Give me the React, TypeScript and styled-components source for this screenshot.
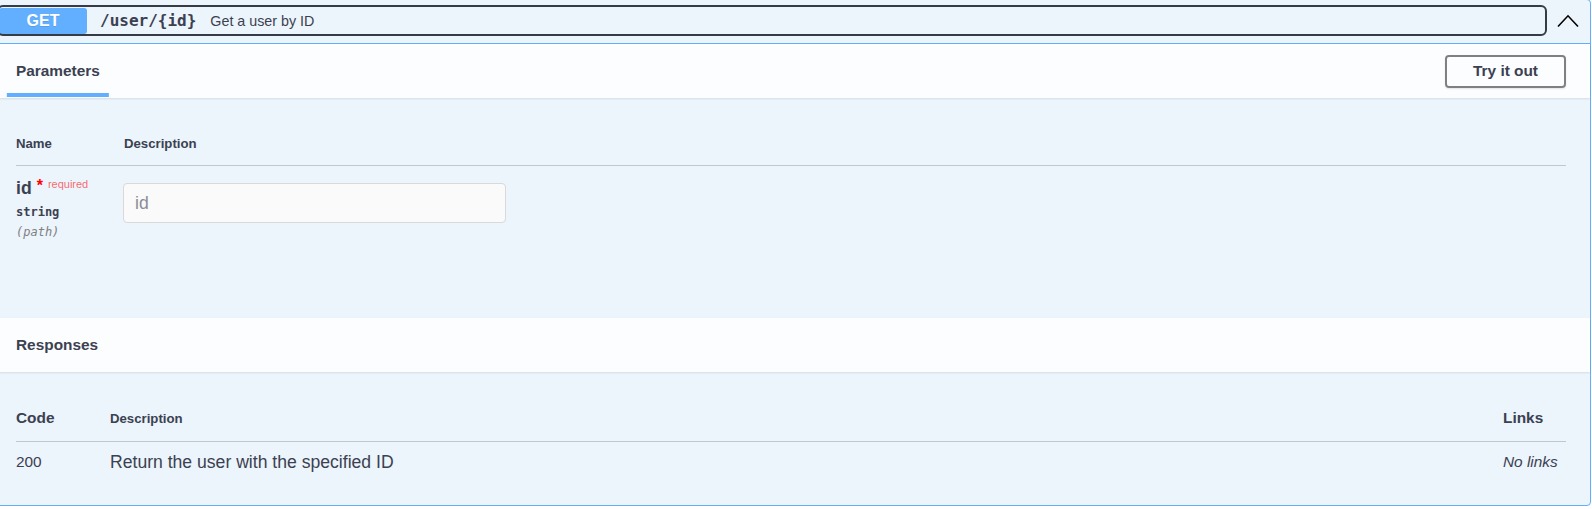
import React from 'react';
import styled, { createGlobalStyle } from 'styled-components';

const GlobalStyle = createGlobalStyle`
  html, body {
    margin: 0;
    padding: 0;
    background: #fff;
    overflow: hidden;
  }
  body {
    font-family: "Liberation Sans", Arial, sans-serif;
    color: #3b4151;
  }
`;

const Opblock = styled.div`
  box-sizing: border-box;
  width: calc(100% + 6px);
  margin: -1px 0 0 -7px;
  border: 1px solid #61affe;
  border-radius: 4px;
  background: #ecf4fc;
`;

const Summary = styled.div`
  display: flex;
  align-items: flex-start;
  height: 44px;
  box-sizing: border-box;
  padding: 7px 0 0 5px;
  border-bottom: 1px solid #61affe;
`;

const SummaryControl = styled.button`
  flex: 1;
  display: flex;
  align-items: center;
  height: 27px;
  padding: 0;
  margin: 0;
  border: none;
  background: transparent;
  outline: 2px solid #363b48;
  border-radius: 4px;
  cursor: pointer;
  text-align: left;
`;

const MethodBadge = styled.span`
  box-sizing: border-box;
  width: 88px;
  height: 26px;
  display: flex;
  align-items: center;
  justify-content: center;
  background: #61affe;
  border-radius: 3px;
  color: #fff;
  font-weight: 700;
  font-size: 16px;
  text-shadow: 0 1px 0 rgba(0, 0, 0, 0.1);
`;

const PathText = styled.span`
  font-family: "DejaVu Sans Mono", "Liberation Mono", monospace;
  font-weight: 700;
  font-size: 16px;
  color: #3b4151;
  padding-left: 13px;
`;

const SummaryDescription = styled.span`
  font-size: 14.3px;
  color: #3b4151;
  padding-left: 14px;
`;

const ArrowButton = styled.button`
  width: 44px;
  height: 27px;
  padding: 0;
  margin: 0 0 0 1px;
  border: none;
  background: transparent;
  display: flex;
  align-items: center;
  justify-content: center;
  cursor: pointer;
`;

const SectionHeader = styled.div`
  display: flex;
  align-items: center;
  justify-content: space-between;
  height: 54px;
  padding: 0 24px 0 22px;
  background: rgba(255, 255, 255, 0.8);
  box-shadow: 0 1px 2px rgba(0, 0, 0, 0.1);
  position: relative;
`;

const SectionTitle = styled.h4`
  margin: 0;
  font-size: 15.4px;
  font-weight: 700;
  color: #3b4151;
`;

const TabTitle = styled.span`
  position: relative;
  display: inline-block;
  &::after {
    content: '';
    position: absolute;
    left: 50%;
    bottom: -17px;
    width: 122%;
    height: 4px;
    transform: translateX(-50%);
    background: #61affe;
  }
`;

const TryButton = styled.button`
  box-sizing: border-box;
  width: 121px;
  height: 33px;
  border: 2px solid #808080;
  border-radius: 4px;
  background: transparent;
  font-family: "Liberation Sans", Arial, sans-serif;
  font-size: 15.4px;
  font-weight: 700;
  color: #3b4151;
  cursor: pointer;
  box-shadow: 0 1px 2px rgba(0, 0, 0, 0.1);
`;

const SectionBody = styled.div<{ $height?: number }>`
  box-sizing: border-box;
  padding: 22px 24px 22px 22px;
  height: ${({ $height }) => ($height ? `${$height}px` : 'auto')};
`;

const HeadRow = styled.div<{ $height: number }>`
  display: flex;
  align-items: center;
  height: ${({ $height }) => $height}px;
  border-bottom: 1px solid rgba(59, 65, 81, 0.25);
`;

const BodyRow = styled.div<{ $pad: string }>`
  display: flex;
  align-items: flex-start;
  padding: ${({ $pad }) => $pad};
`;

const Cell = styled.div<{ $width?: number; $grow?: boolean }>`
  width: ${({ $width }) => ($width ? `${$width}px` : 'auto')};
  flex: ${({ $grow }) => ($grow ? 1 : 'none')};
`;

const ColHeader = styled.span<{ $size: number }>`
  font-size: ${({ $size }) => $size}px;
  font-weight: 700;
  color: #3b4151;
`;

const ParamName = styled.div`
  display: flex;
  align-items: flex-start;
  font-size: 17.6px;
  font-weight: 700;
  color: #3b4151;
  line-height: 20px;
  margin-top: -5px;
`;

const Asterisk = styled.span`
  color: red;
  font-size: 16px;
  font-weight: 700;
  margin-left: 5px;
  line-height: 16px;
`;

const RequiredLabel = styled.span`
  color: rgba(255, 0, 0, 0.6);
  font-size: 11px;
  font-weight: 400;
  margin-left: 5px;
  line-height: 14px;
  margin-top: -1px;
`;

const ParamType = styled.div`
  font-family: "DejaVu Sans Mono", "Liberation Mono", monospace;
  font-size: 12px;
  font-weight: 700;
  color: #3b4151;
  padding-top: 7px;
  line-height: 15px;
`;

const ParamIn = styled.div`
  font-family: "DejaVu Sans Mono", "Liberation Mono", monospace;
  font-size: 12px;
  font-style: italic;
  color: #808080;
  padding-top: 5px;
  line-height: 15px;
`;

const TextInput = styled.input`
  box-sizing: border-box;
  width: 383px;
  height: 40px;
  padding: 0 11px;
  margin: 0;
  border: 1px solid #d9d9d9;
  border-radius: 4px;
  background: #fafafa;
  font-family: "Liberation Sans", Arial, sans-serif;
  font-size: 17.6px;
  color: #3b4151;
  outline: none;
  &::placeholder {
    color: #8a8d94;
  }
`;

const CodeText = styled.span`
  font-size: 15.4px;
  color: #3b4151;
  line-height: 20px;
`;

const ResponseDescription = styled.span`
  font-size: 17.6px;
  color: #3b4151;
  line-height: 20px;
`;

const NoLinks = styled.i`
  font-size: 15.4px;
  color: #3b4151;
  line-height: 20px;
`;

function ChevronUp() {
  return (
    <svg width="22" height="14" viewBox="0 0 22 14" aria-hidden="true">
      <polyline points="1,12.5 11,1.8 21,12.5" fill="none" stroke="#000" strokeWidth="1.6" />
    </svg>
  );
}

export default function App() {
  return (
    <>
      <GlobalStyle />
      <Opblock>
        <Summary>
          <SummaryControl>
            <MethodBadge>GET</MethodBadge>
            <PathText>/user/{'{id}'}</PathText>
            <SummaryDescription>Get a user by ID</SummaryDescription>
          </SummaryControl>
          <ArrowButton aria-label="collapse">
            <ChevronUp />
          </ArrowButton>
        </Summary>

        <SectionHeader>
          <SectionTitle>
            <TabTitle>Parameters</TabTitle>
          </SectionTitle>
          <TryButton>Try it out</TryButton>
        </SectionHeader>

        <SectionBody $height={220}>
          <HeadRow $height={45}>
            <Cell $width={108}>
              <ColHeader $size={13.2}>Name</ColHeader>
            </Cell>
            <Cell $grow>
              <ColHeader $size={13.2}>Description</ColHeader>
            </Cell>
          </HeadRow>
          <BodyRow $pad="17px 0 0 0">
            <Cell $width={107}>
              <ParamName>
                id
                <Asterisk>*</Asterisk>
                <RequiredLabel>required</RequiredLabel>
              </ParamName>
              <ParamType>string</ParamType>
              <ParamIn>(path)</ParamIn>
            </Cell>
            <Cell $grow>
              <TextInput placeholder="id" />
            </Cell>
          </BodyRow>
        </SectionBody>

        <SectionHeader>
          <SectionTitle>Responses</SectionTitle>
        </SectionHeader>

        <SectionBody>
          <HeadRow $height={47}>
            <Cell $width={94}>
              <ColHeader $size={15.4}>Code</ColHeader>
            </Cell>
            <Cell $grow>
              <ColHeader $size={13.2}>Description</ColHeader>
            </Cell>
            <Cell $width={63}>
              <ColHeader $size={15.4}>Links</ColHeader>
            </Cell>
          </HeadRow>
          <BodyRow $pad="10px 0 11px 0">
            <Cell $width={94}>
              <CodeText>200</CodeText>
            </Cell>
            <Cell $grow>
              <ResponseDescription>Return the user with the specified ID</ResponseDescription>
            </Cell>
            <Cell $width={63}>
              <NoLinks>No links</NoLinks>
            </Cell>
          </BodyRow>
        </SectionBody>
      </Opblock>
    </>
  );
}
